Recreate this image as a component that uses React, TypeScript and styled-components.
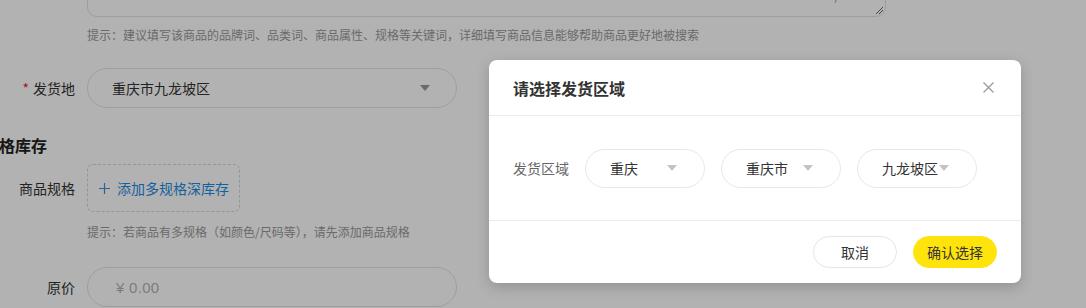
import styled, { createGlobalStyle } from "styled-components";

const GlobalStyle = createGlobalStyle`
  html, body {
    margin: 0;
    padding: 0;
    background: #ffffff;
    overflow: hidden;
    font-family: "Noto Sans CJK SC", "Noto Sans", sans-serif;
    color: #333333;
  }
`;

const Page = styled.div`
  width: 1086px;
  height: 308px;
  overflow: hidden;
  position: relative;
`;

const Form = styled.div`
  display: flex;
  flex-direction: column;
`;

const TextAreaBox = styled.div`
  position: relative;
  margin-left: 87px;
  margin-top: -43px;
  width: 797px;
  height: 58px;
  border: 1px solid #e3e3e3;
  border-radius: 10px;
`;

const Counter = styled.span`
  position: absolute;
  right: 14px;
  bottom: 12px;
  font-size: 14px;
  color: #999999;
`;

const ResizeGrip = styled.svg`
  position: absolute;
  right: 1px;
  bottom: 1px;
`;

const Hint = styled.div<{ $top: number }>`
  margin: ${(p) => p.$top}px 0 0 87px;
  font-size: 12px;
  line-height: 18px;
  color: #999999;
  white-space: nowrap;
`;

const Row = styled.div<{ $top: number }>`
  display: flex;
  align-items: center;
  gap: 12px;
  margin-top: ${(p) => p.$top}px;
`;

const Label = styled.div`
  width: 75px;
  text-align: right;
  font-size: 14px;
  color: #333333;
  white-space: nowrap;
`;

const Star = styled.span`
  color: #f5222d;
  margin-right: 4px;
`;

const PillField = styled.div`
  box-sizing: border-box;
  width: 370px;
  height: 40px;
  border: 1px solid #e3e3e3;
  border-radius: 20px;
  display: flex;
  align-items: center;
  justify-content: space-between;
  padding: 0 26px 0 24px;
  font-size: 14px;
`;

const Placeholder = styled.span`
  margin-left: 4px;
  color: #b3b3b3;
  font-family: "Liberation Sans", "Noto Sans CJK SC", sans-serif;
  font-size: 15px;
  letter-spacing: 0.3px;
`;

const Caret = styled.span<{ $color?: string }>`
  width: 0;
  height: 0;
  border-left: 5px solid transparent;
  border-right: 5px solid transparent;
  border-top: 6px solid ${(p) => p.$color ?? "#999999"};
  flex: none;
`;

const SectionTitle = styled.div`
  margin: 25px 0 0 -17px;
  font-size: 16px;
  line-height: 24px;
  font-weight: 700;
  color: #222222;
`;

const DashedBox = styled.div`
  box-sizing: border-box;
  width: 153px;
  height: 48px;
  border: 1px dashed #d6d6d6;
  border-radius: 6px;
  display: flex;
  align-items: center;
  padding-left: 11px;
  gap: 7px;
  font-size: 14px;
  color: #1e8be6;
  white-space: nowrap;
`;

const Overlay = styled.div`
  position: absolute;
  inset: 0;
  background: rgba(0, 0, 0, 0.3);
`;

const Modal = styled.div`
  position: absolute;
  left: 489px;
  top: 60px;
  width: 532px;
  background: #ffffff;
  border-radius: 8px;
  box-shadow: 0 4px 14px rgba(0, 0, 0, 0.18);
  display: flex;
  flex-direction: column;
`;

const ModalHeader = styled.div`
  height: 55px;
  display: flex;
  align-items: center;
  justify-content: space-between;
  padding: 0 26px 0 24px;
  border-bottom: 1px solid #ebebeb;
`;

const ModalTitle = styled.div`
  font-size: 16px;
  font-weight: 700;
  color: #333333;
  margin-top: 1px;
`;

const CloseButton = styled.button`
  border: none;
  background: none;
  padding: 0;
  width: 14px;
  height: 14px;
  display: flex;
  align-items: center;
  justify-content: center;
  cursor: pointer;
`;

const ModalBody = styled.div`
  height: 104px;
  display: flex;
  align-items: center;
  gap: 16px;
  padding: 0 24px;
  border-bottom: 1px solid #ebebeb;
`;

const BodyLabel = styled.div`
  font-size: 14px;
  color: #666666;
  white-space: nowrap;
`;

const AreaSelect = styled.div`
  box-sizing: border-box;
  width: 120px;
  height: 39px;
  border: 1px solid #e8e8e8;
  border-radius: 20px;
  display: flex;
  align-items: center;
  justify-content: space-between;
  padding: 0 27px 0 24px;
  font-size: 14px;
  color: #333333;
  white-space: nowrap;
`;

const ModalFooter = styled.div`
  height: 62px;
  display: flex;
  align-items: center;
  justify-content: flex-end;
  gap: 16px;
  padding: 0 24px;
`;

const Button = styled.button<{ $primary?: boolean }>`
  box-sizing: border-box;
  width: 84px;
  height: 32px;
  border-radius: 16px;
  border: 1px solid ${(p) => (p.$primary ? "#ffe40b" : "#e6e6e6")};
  background: ${(p) => (p.$primary ? "#ffe40b" : "#ffffff")};
  font-family: "Noto Sans CJK SC", sans-serif;
  font-size: 14px;
  color: #333333;
  cursor: pointer;
  padding: 0;
`;

export default function App() {
  return (
    <Page>
      <GlobalStyle />
      <Form>
        <TextAreaBox>
          <Counter>0/5000</Counter>
          <ResizeGrip width="9" height="9" viewBox="0 0 9 9">
            <path d="M1 8 L8 1 M4 8 L8 4" stroke="#666" strokeWidth="1" />
          </ResizeGrip>
        </TextAreaBox>
        <Hint $top={9}>
          提示：建议填写该商品的品牌词、品类词、商品属性、规格等关键词，详细填写商品信息能够帮助商品更好地被搜索
        </Hint>
        <Row $top={24}>
          <Label>
            <Star>*</Star>发货地
          </Label>
          <PillField>
            <span>重庆市九龙坡区</span>
            <Caret />
          </PillField>
        </Row>
        <SectionTitle>规格库存</SectionTitle>
        <Row $top={7}>
          <Label>商品规格</Label>
          <DashedBox>
            <svg width="11" height="11" viewBox="0 0 11 11">
              <path d="M5.5 0 V11 M0 5.5 H11" stroke="#3b8fd6" strokeWidth="1.2" />
            </svg>
            添加多规格深库存
          </DashedBox>
        </Row>
        <Hint $top={11}>提示：若商品有多规格（如颜色/尺码等），请先添加商品规格</Hint>
        <Row $top={26}>
          <Label>原价</Label>
          <PillField>
            <Placeholder>¥ 0.00</Placeholder>
          </PillField>
        </Row>
      </Form>
      <Overlay />
      <Modal>
        <ModalHeader>
          <ModalTitle>请选择发货区域</ModalTitle>
          <CloseButton aria-label="关闭">
            <svg width="11" height="11" viewBox="0 0 11 11">
              <path d="M0.5 0.5 L10.5 10.5 M10.5 0.5 L0.5 10.5" stroke="#999" strokeWidth="1.2" />
            </svg>
          </CloseButton>
        </ModalHeader>
        <ModalBody>
          <BodyLabel>发货区域</BodyLabel>
          <AreaSelect>
            <span>重庆</span>
            <Caret $color="#c4c4c4" />
          </AreaSelect>
          <AreaSelect>
            <span>重庆市</span>
            <Caret $color="#c4c4c4" />
          </AreaSelect>
          <AreaSelect>
            <span>九龙坡区</span>
            <Caret $color="#c4c4c4" />
          </AreaSelect>
        </ModalBody>
        <ModalFooter>
          <Button>取消</Button>
          <Button $primary>确认选择</Button>
        </ModalFooter>
      </Modal>
    </Page>
  );
}
